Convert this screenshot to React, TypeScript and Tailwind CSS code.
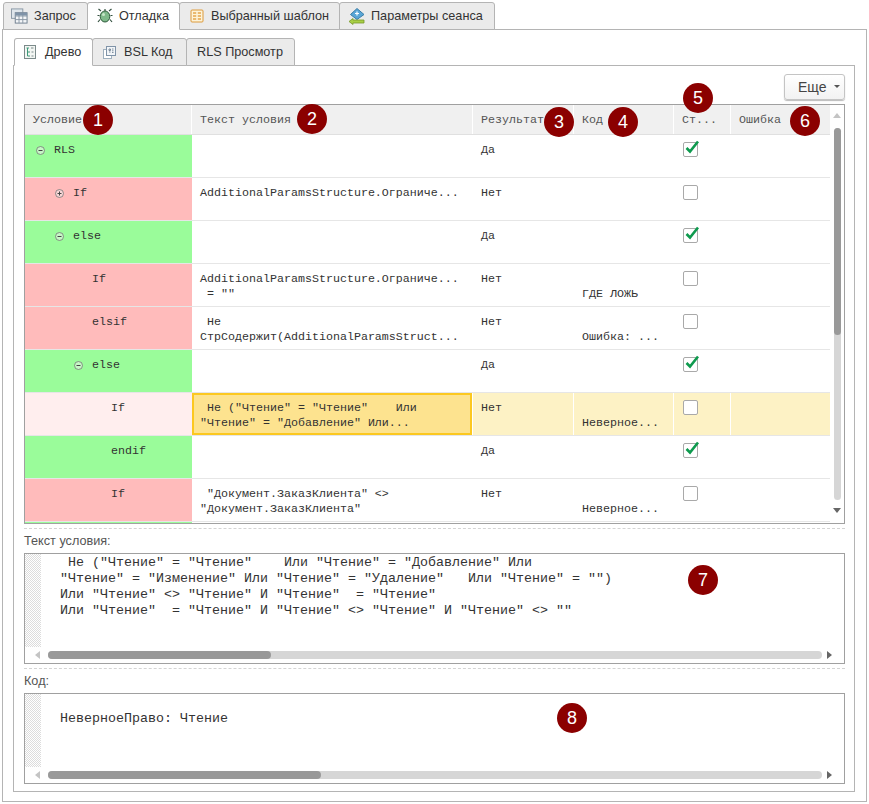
import React from 'react';

const MONO = "font-['Liberation_Mono',monospace]";
const COLS = 'grid grid-cols-[167px_281px_101px_100px_57px_100px]';

type Row = {
  indent: number;
  label: string;
  toggle?: 'plus' | 'minus';
  state: 'ok' | 'bad' | 'current';
  text?: string;
  result: string;
  code?: string;
  checked: boolean;
};

const ROWS: Row[] = [
  { indent: 29, label: 'RLS', toggle: 'minus', state: 'ok', result: 'Да', checked: true },
  { indent: 48, label: 'If', toggle: 'plus', state: 'bad', text: 'AdditionalParamsStructure.Ограниче...', result: 'Нет', checked: false },
  { indent: 48, label: 'else', toggle: 'minus', state: 'ok', result: 'Да', checked: true },
  { indent: 67, label: 'If', state: 'bad', text: 'AdditionalParamsStructure.Ограниче...\n = ""', result: 'Нет', code: 'ГДЕ ЛОЖЬ', checked: false },
  { indent: 67, label: 'elsif', state: 'bad', text: ' Не\nСтрСодержит(AdditionalParamsStruct...', result: 'Нет', code: 'Ошибка: ...', checked: false },
  { indent: 67, label: 'else', toggle: 'minus', state: 'ok', result: 'Да', checked: true },
  { indent: 86, label: 'If', state: 'current', text: ' Не ("Чтение" = "Чтение"    Или\n"Чтение" = "Добавление" Или...', result: 'Нет', code: 'Неверное...', checked: false },
  { indent: 86, label: 'endif', state: 'ok', result: 'Да', checked: true },
  { indent: 86, label: 'If', state: 'bad', text: ' "Документ.ЗаказКлиента" <>\n"Документ.ЗаказКлиента"', result: 'Нет', code: 'Неверное...', checked: false },
];

const BADGES = [
  { n: 1, x: 83, y: 105 },
  { n: 2, x: 297, y: 104 },
  { n: 3, x: 544, y: 107 },
  { n: 4, x: 608, y: 107 },
  { n: 5, x: 683, y: 83 },
  { n: 6, x: 790, y: 106 },
  { n: 7, x: 688, y: 565 },
  { n: 8, x: 557, y: 703 },
];

const TableIcon = () => (
  <svg width="17" height="16" viewBox="0 0 18 16" fill="none">
    <rect x="0.5" y="0.5" width="12" height="10" fill="#dfe6ec" stroke="#8a98a6" />
    <rect x="4.5" y="4.5" width="12.5" height="11" fill="#f4f6f8" stroke="#6f7f8f" />
    <path d="M4.5 8h12.5M4.5 11.800h12.5M8.500 4.500v11M12.500 4.500v11" stroke="#8a98a6" />
    <rect x="4.500" y="4.500" width="12.500" height="3" fill="#7f93a8" />
  </svg>
);

const BugIcon = () => (
  <svg width="16" height="16" viewBox="0 0 16 16" fill="none">
    <path d="M4 3 1.500 1M12 3l2.500-2M2.500 7.500H0.500M13.500 7.500h2M3 11.500 1 14M13 11.500l2 2.500M8 3V1" stroke="#33503f" strokeWidth="1.200" />
    <ellipse cx="8" cy="8.500" rx="4.800" ry="5.500" fill="#7fb98a" stroke="#2f5a3c" />
    <circle cx="6.500" cy="6.500" r="1.500" fill="#c8e6c9" />
  </svg>
);

const TemplateIcon = () => (
  <svg width="14" height="14" viewBox="0 0 14 14" fill="none">
    <rect x="1" y="1" width="12" height="12" rx="1" fill="#fdf3d8" stroke="#dc9a3c" />
    <path d="M3 4h3.200M7.800 4H11M3 7h3.200M7.800 7H11M3 10h3.200M7.800 10H11" stroke="#e5a64c" strokeWidth="1.500" />
  </svg>
);

const ParamsIcon = () => (
  <svg width="17" height="17" viewBox="0 0 17 17" fill="none">
    <path d="M9 0.500 16 6.500 9 11.500 2.500 6.500Z" fill="#5aa6d6" stroke="#3a7ea8" />
    <path d="M9 3.500v4M7 5.500h4" stroke="#fff" strokeWidth="1.200" />
    <path d="M1 13.500 5 10.500v1.500h11v3H5v1.500Z" fill="#a8cf45" stroke="#76982a" strokeWidth="0.800" />
  </svg>
);

const TreeIcon = () => (
  <svg width="12" height="14" viewBox="0 0 12 14" fill="none">
    <rect x="0.500" y="0.500" width="11" height="13" fill="#f3f6f3" stroke="#7b8a8a" />
    <path d="M3.500 3v8M2.500 3h2.500M3.500 7H6M3.500 11H6" stroke="#3f9a7a" />
    <path d="M7 3h2.500M7.500 7h2M7.500 11h2" stroke="#7b8a8a" />
  </svg>
);

const CodeIcon = () => (
  <svg width="13" height="13" viewBox="0 0 13 13" fill="none">
    <rect x="0.500" y="3.500" width="8" height="9" fill="#fff" stroke="#9fb0be" />
    <rect x="3.500" y="0.500" width="9" height="9" fill="#f2f5f8" stroke="#7f93a8" />
    <path d="M6 3h1.500v1.500H6zM6 6h1.500M9 3h1.500M9 4.800h1.500M9 6.500h1.500" stroke="#5f7488" strokeWidth="0.800" />
  </svg>
);

const Toggle = ({ kind }: { kind: 'plus' | 'minus' }) => (
  <svg width="9" height="9" viewBox="0 0 9 9" fill="none" className="shrink-0">
    <circle cx="4.500" cy="4.500" r="4" fill="#f2f2f2" fillOpacity="0.500" stroke="#777" strokeWidth="0.800" />
    <path d={kind === 'plus' ? 'M2.500 4.500h4M4.500 2.500v4' : 'M2.500 4.500h4'} stroke="#444" />
  </svg>
);

const Checkbox = ({ checked }: { checked: boolean }) => (
  <div className="relative w-[15px] h-[15px] rounded-[2px] border border-[#a9a9a9] bg-white">
    {checked && (
      <svg width="15" height="15" viewBox="0 0 15 15" fill="none" className="absolute left-[1px] top-[-3px]">
        <path d="M1.500 8 5 11.500 13 1.500" stroke="#0e9a4e" strokeWidth="2.600" />
      </svg>
    )}
  </div>
);

const Tab = ({
  icon,
  label,
  active,
  className,
}: {
  icon?: React.ReactNode;
  label: string;
  active?: boolean;
  className: string;
}) => (
  <div
    className={`relative flex items-center border border-[#b4b4b4] rounded-t-[3px] ${
      active ? 'bg-white border-b-white z-10' : 'bg-[#ebebeb]'
    } ${className}`}
  >
    {icon}
    <span>{label}</span>
  </div>
);

const Arrow = ({ dir }: { dir: 'up' | 'down' | 'left' | 'right' }) => {
  const d = {
    up: 'M0 5 4 0 8 5Z',
    down: 'M0 0h8L4 5Z',
    left: 'M5 0v8L0 4Z',
    right: 'M0 0v8l5-4Z',
  }[dir];
  const up = dir === 'up';
  return (
    <svg width="8" height="8" viewBox="0 0 8 8" className="shrink-0">
      <path d={d} fill={up || dir === 'left' ? '#c4c4c4' : '#666'} />
    </svg>
  );
};

const HScroll = ({ thumb }: { thumb: string }) => (
  <div className="flex items-center h-[16px] pl-[10px] pr-[9px] gap-[5px]">
    <Arrow dir="left" />
    <div className="flex-1 h-[8px] rounded bg-[#d6d6d6]">
      <div className={`h-[8px] rounded bg-[#999] ${thumb}`} />
    </div>
    <Arrow dir="right" />
  </div>
);

const Editor = ({ lines, thumb, body, top }: { lines: string; thumb: string; body: string; top: string }) => (
  <div className="flex flex-col border border-[#a0a0a0] bg-white">
    <div className={`flex ${body}`}>
      <div className="w-[16px] bg-[repeating-conic-gradient(#dcdcdc_0_25%,#ffffff_0_50%)] bg-[length:2px_2px]" />
      <pre className={`pl-[19px] ${top} ${MONO} text-[13.33px] leading-[16px] text-[#333]`}>{lines}</pre>
    </div>
    <HScroll thumb={thumb} />
  </div>
);

const rowClass = (s: Row['state']) =>
  s === 'ok' ? 'bg-[#9afc9a]' : s === 'bad' ? 'bg-[#ffbbbb]' : 'bg-[#ffeeee]';

const App = () => {
  return (
    <div className="relative w-[869px] h-[804px] bg-white font-['Liberation_Sans',sans-serif] text-[12.67px] text-[#333] overflow-hidden pt-[2px] pl-[2px]">
      {/* верхние вкладки */}
      <div className="flex pl-[1px] h-[28px] -mb-px">
        <Tab className="w-[85px] pl-[7px] gap-[6px]" icon={<TableIcon />} label="Запрос" />
        <Tab active className="w-[93px] pl-[9px] gap-[6px] ml-[-1px]" icon={<BugIcon />} label="Отладка" />
        <Tab className="w-[161px] pl-[10px] gap-[7px] ml-[-1px]" icon={<TemplateIcon />} label="Выбранный шаблон" />
        <Tab className="w-[156px] pl-[8px] gap-[6px] ml-[-1px]" icon={<ParamsIcon />} label="Параметры сеанса" />
      </div>

      <div className="w-[865px] h-[773px] border border-[#b4b4b4] pt-[8px] pl-[10px]">
        {/* вложенные вкладки */}
        <div className="flex pl-[1px] h-[28px] -mb-px">
          <Tab active className="w-[79px] pl-[9px] gap-[9px]" icon={<TreeIcon />} label="Древо" />
          <Tab className="w-[95px] pl-[10px] gap-[8px] ml-[-1px]" icon={<CodeIcon />} label="BSL Код" />
          <Tab className="w-[109px] pl-[10px] ml-[-1px]" label="RLS Просмотр" />
        </div>

        <div className="w-[842px] h-[727px] border border-[#b4b4b4] pt-[8px] pl-[10px]">
          <div className="flex justify-end h-[30px] pr-[9px]">
            <button className="w-[61px] h-[26px] flex items-center pl-[13px] gap-[7px] rounded-[3px] border border-[#c4c4c4] bg-gradient-to-b from-white to-[#f2f2f2] shadow-[0_1px_1px_#bbb] text-[14px] text-[#444]">
              Еще
              <svg width="6" height="4" viewBox="0 0 6 4">
                <path d="M0 0h6L3 3Z" fill="#555" />
              </svg>
            </button>
          </div>

          {/* таблица */}
          <div className={`relative w-[821px] h-[420px] border border-[#a0a0a0] overflow-hidden bg-white ${MONO} text-[11.67px] leading-[15px]`}>
            <div className={`${COLS} w-[805px] h-[30px] bg-[#f0f0f0] border-b border-[#e0e0e0] text-[#555]`}>
              {['Условие', 'Текст условия', 'Результат', 'Код', 'Ст...', 'Ошибка'].map((h) => (
                <div key={h} className="pl-[8px] pt-[8px] border-r border-white last:border-r-0">
                  {h}
                </div>
              ))}
            </div>
            {ROWS.map((r, i) => {
              const cur = r.state === 'current';
              const cell = `pl-[8px] pt-[8px] whitespace-pre ${cur ? 'bg-[#fdf2c5] border-r border-white' : ''}`;
              return (
                <div key={i} className={`${COLS} w-[806px] h-[43px] border-b border-[#e6e6e6]`}>
                  <div className={`${rowClass(r.state)} flex items-start pt-[8px] gap-[9px] relative`} style={{ paddingLeft: r.indent - (r.toggle ? 18 : 0) }}>
                    {r.toggle && (
                      <span className="mt-[3px]">
                        <Toggle kind={r.toggle} />
                      </span>
                    )}
                    <span>{r.label}</span>
                  </div>
                  {cur ? (
                    <div className="whitespace-pre pl-[6px] pt-[6px] bg-[#fde38f] border-2 border-[#fcc820] mr-px">{r.text}</div>
                  ) : (
                    <div className={cell}>{r.text}</div>
                  )}
                  <div className={cell}>{r.result}</div>
                  <div className={`${cell} pt-[23px]`}>{r.code}</div>
                  <div className={`${cur ? 'bg-[#fdf2c5] border-r border-white' : ''} pl-[9px] pt-[7px]`}>
                    <Checkbox checked={r.checked} />
                  </div>
                  <div className={cur ? 'bg-[#fdf2c5]' : ''} />
                </div>
              );
            })}
            <div className="w-[167px] h-[4px] bg-[#9afc9a]" />
            {/* вертикальная прокрутка */}
            <div className="absolute right-0 top-0 w-[14px] h-full flex flex-col items-center bg-white pt-[8px] pb-[3px]">
              <Arrow dir="up" />
              <div className="w-[7px] h-[372px] mt-[7px] rounded bg-[#d6d6d6]">
                <div className="w-[7px] h-[207px] rounded bg-[#999]" />
              </div>
              <div className="mt-[8px]">
                <Arrow dir="down" />
              </div>
            </div>
          </div>

          <div className="w-[821px] mt-[4px] border-t border-dashed border-[#d4d4d4]" />
          <div className="w-[821px] h-[24px] pt-[3px] text-[#555]">Текст условия:</div>
          <div className="w-[821px]">
            <Editor
              body="h-[93px]"
              top="pt-[1px]"
              thumb="w-[223px]"
              lines={` Не ("Чтение" = "Чтение"    Или "Чтение" = "Добавление" Или\n"Чтение" = "Изменение" Или "Чтение" = "Удаление"   Или "Чтение" = "")\nИли "Чтение" <> "Чтение" И "Чтение"  = "Чтение"\nИли "Чтение"  = "Чтение" И "Чтение" <> "Чтение" И "Чтение" <> ""`}
            />
          </div>
          <div className="w-[821px] mt-[4px] border-t border-dashed border-[#d4d4d4]" />
          <div className="w-[821px] h-[24px] pt-[3px] text-[#555]">Код:</div>
          <div className="w-[821px]">
            <Editor body="h-[73px]" top="pt-[17px]" thumb="w-[273px]" lines="НеверноеПраво: Чтение" />
          </div>
        </div>
      </div>

      {BADGES.map((b) => (
        <div
          key={b.n}
          className="absolute w-[30px] h-[30px] rounded-full bg-[#8b0000] text-white flex items-center justify-center text-[18px] z-20"
          style={{ left: b.x, top: b.y }}
        >
          {b.n}
        </div>
      ))}
    </div>
  );
};

export default App;
